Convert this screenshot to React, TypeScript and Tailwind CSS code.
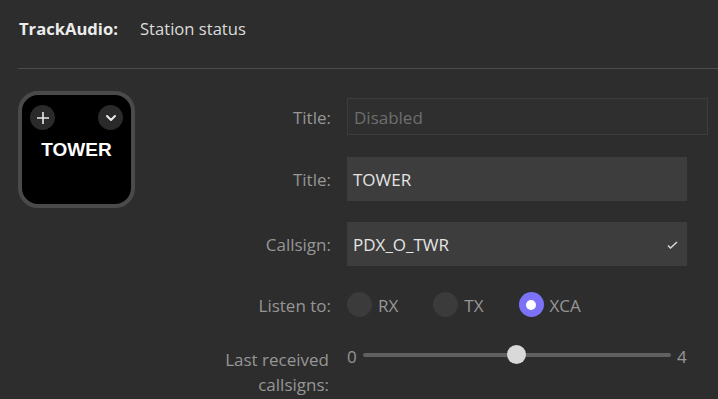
import React from "react";

const font = { fontFamily: '"Open Sans", "Noto Sans", sans-serif' };

function Label({ children }: { children: React.ReactNode }) {
  return (
    <div className="w-[212px] shrink-0 pr-[16px] pt-[2px] text-right text-[17px] text-[#969696]">
      {children}
    </div>
  );
}

function Radio({ label, checked }: { label: string; checked?: boolean }) {
  return (
    <div className="flex items-center gap-[6px]">
      <div
        className={
          "flex h-[25px] w-[25px] items-center justify-center rounded-full " +
          (checked ? "bg-[#7b72f8]" : "bg-[#3b3b3b]")
        }
      >
        {checked && <div className="h-[10px] w-[10px] rounded-full bg-white" />}
      </div>
      <span className="pt-[1px] text-[17px] text-[#969696]">{label}</span>
    </div>
  );
}

export default function App() {
  return (
    <div
      className="h-[399px] w-[718px] overflow-hidden bg-[#2d2d2d]"
      style={font}
    >
      <div className="flex h-[56px] items-center pl-[19px] pt-[2px] text-[16.6px]">
        <span className="w-[121px] font-bold text-[#ececec]">TrackAudio:</span>
        <span className="text-[#dcdcdc]">Station status</span>
      </div>
      <div className="ml-[18px] mt-[12px] h-px bg-[#4c4c4c]" />
      <div className="mt-[22px] flex">
        <div className="ml-[18px] h-[117px] w-[117px] shrink-0 rounded-[20px] border-[4px] border-[#4a4a4a] bg-black">
          <div className="flex justify-between px-[8px] pt-[10px]">
            <div className="flex h-[25px] w-[25px] items-center justify-center rounded-full bg-[#2a2a2a]">
              <svg width="14" height="14" viewBox="0 0 14 14">
                <path d="M7 1v12M1 7h12" stroke="#e8e8e8" strokeWidth="1.6" />
              </svg>
            </div>
            <div className="flex h-[25px] w-[25px] items-center justify-center rounded-full bg-[#2a2a2a]">
              <svg width="12" height="8" viewBox="0 0 12 8">
                <path d="M2 2l4 4 4-4" stroke="#e8e8e8" strokeWidth="2" fill="none" strokeLinecap="round" strokeLinejoin="round" />
              </svg>
            </div>
          </div>
          <div
            className="mt-[8px] text-center text-[19px] font-bold leading-[24px] text-white"
            style={{ fontFamily: '"Liberation Sans", Arial, sans-serif' }}
          >
            TOWER
          </div>
        </div>
        <div className="flex flex-col pt-[7px]">
          <div className="flex items-center">
            <Label>Title:</Label>
            <div className="flex h-[37px] w-[361px] items-center border border-[#3c3c3c] bg-[#2f2f2f] px-[6px] pt-[2px] text-[17px] text-[#6e6e6e]">
              Disabled
            </div>
          </div>
          <div className="mt-[22px] flex items-center">
            <Label>Title:</Label>
            <div className="flex h-[44px] w-[340px] items-center bg-[#3d3d3d] px-[6px] pt-[2px] text-[17px] text-[#e4e4e4]">
              TOWER
            </div>
          </div>
          <div className="mt-[21px] flex items-center">
            <Label>Callsign:</Label>
            <div className="flex h-[44px] w-[340px] items-center justify-between bg-[#3d3d3d] pl-[6px] pr-[9px] pt-[2px] text-[17px] text-[#e4e4e4]">
              <span>PDX_O_TWR</span>
              <svg width="11" height="8" viewBox="0 0 11 8">
                <path d="M1 4.5l2.5 2.5L10 1" stroke="#d4d4d4" strokeWidth="1.6" fill="none" />
              </svg>
            </div>
          </div>
          <div className="mt-[25px] flex items-center">
            <Label>Listen to:</Label>
            <div className="flex items-center gap-[35px]">
              <Radio label="RX" />
              <Radio label="TX" />
              <Radio label="XCA" checked />
            </div>
          </div>
          <div className="mt-[24px] flex items-start">
            <div className="w-[212px] shrink-0 pr-[18px] pt-[4px] text-right text-[17px] leading-[25px] text-[#969696]">
              Last received
              <br />
              callsigns:
            </div>
            <div className="flex h-[25px] w-[340px] items-center text-[17px] text-[#969696]">
              <span className="w-[16px] pt-[3px]">0</span>
              <div className="relative h-[4px] w-[308px] rounded-full bg-[#606060]">
                <div className="absolute left-[144px] top-[-8px] h-[19px] w-[19px] rounded-full bg-[#d9d9d9]" />
              </div>
              <span className="ml-[6px] pt-[3px]">4</span>
            </div>
          </div>
        </div>
      </div>
    </div>
  );
}
